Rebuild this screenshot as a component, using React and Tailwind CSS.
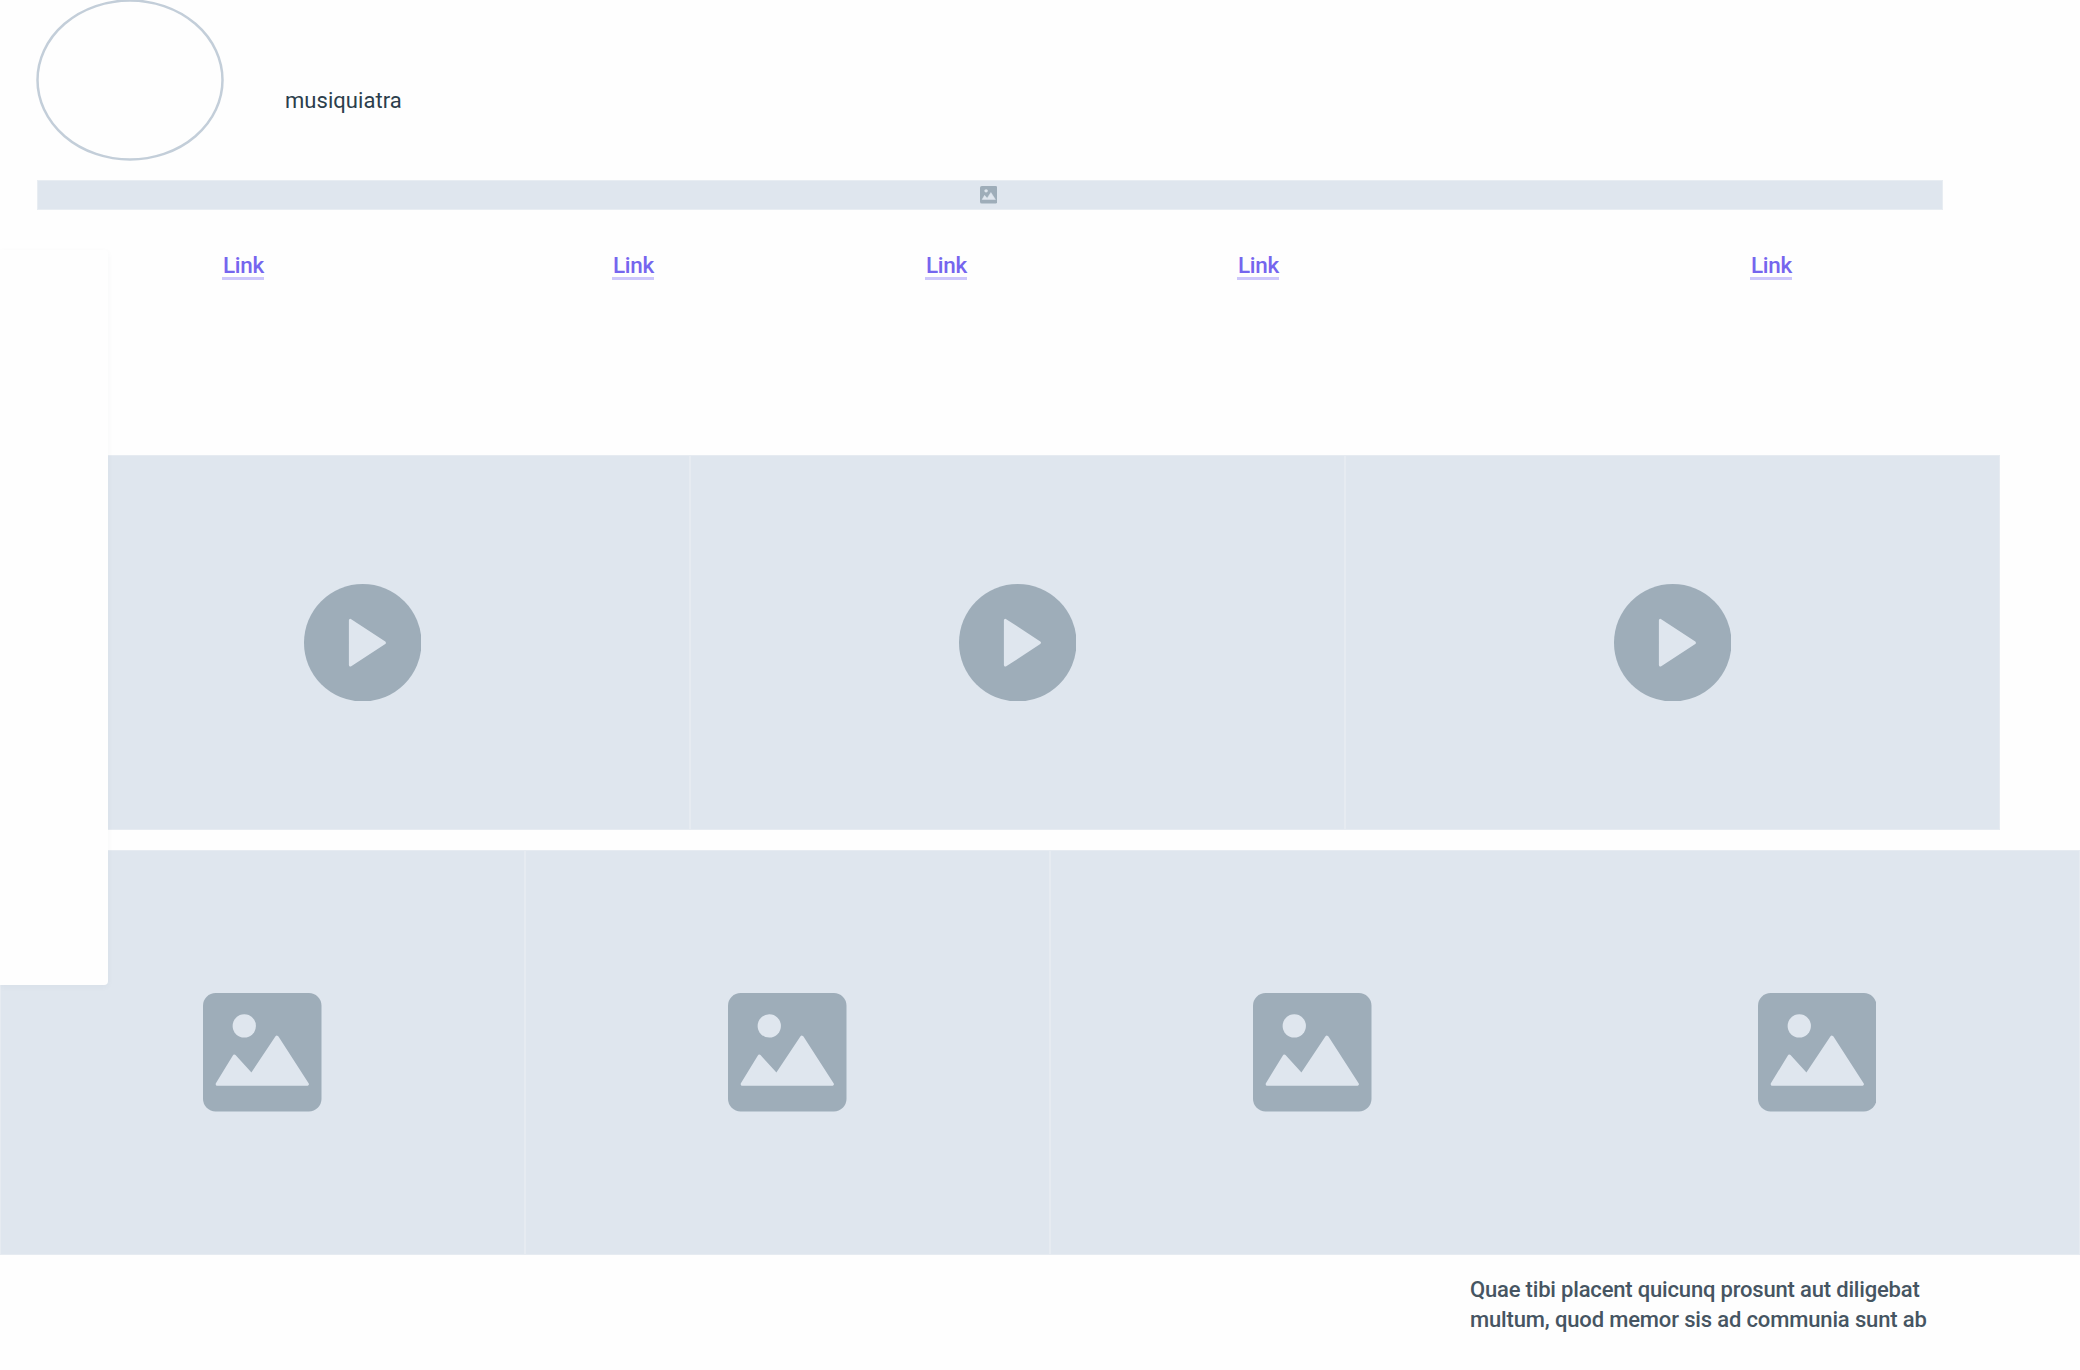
function ImageIcon({ className }) {
  return (
    <svg viewBox="0 0 356 356" className={className}>
      <rect width="356" height="356" rx="38" fill="#9eadb9" />
      <circle cx="124" cy="99" r="35" fill="#dfe6ee" />
      <path
        d="M43 274 94 190 146 247 222 133 313 274Z"
        fill="#dfe6ee"
        stroke="#dfe6ee"
        strokeWidth="10"
        strokeLinejoin="round"
      />
    </svg>
  );
}

function PlayIcon() {
  return (
    <svg viewBox="0 0 352 352" className="size-[117.5px]">
      <circle cx="176" cy="176" r="176" fill="#9eadb9" />
      <path
        d="M139 109V243L241 176Z"
        fill="#dfe6ee"
        stroke="#dfe6ee"
        strokeWidth="9"
        strokeLinejoin="round"
      />
    </svg>
  );
}

function TextLink({ className }) {
  return (
    <a
      className={`h-[30px] w-[42px] shrink-0 border-b-3 border-[#cdc7fb] pl-px text-[22.5px] leading-[31px] font-medium tracking-[-0.3px] whitespace-nowrap text-[#7565ee] ${className}`}
    >
      Link
    </a>
  );
}

const tile =
  "flex shrink-0 items-center justify-center border border-[#e6ebf1] bg-[#dfe6ee]";

export default function App() {
  return (
    <div className="relative h-[1370px] w-[2080px] overflow-hidden bg-[#fefefe] font-['Roboto',sans-serif]">
      <header className="flex h-[180px]">
        <svg viewBox="0 0 188 162" className="-mt-px ml-[36px] h-[162px] w-[188px] shrink-0">
          <ellipse cx="94" cy="81" rx="92.5" ry="79.5" fill="none" stroke="#c3ced9" strokeWidth="2.5" />
        </svg>
        <div className="mt-[86px] ml-[61px] text-[22px] leading-[30px] tracking-[0.04px] text-[#2c3e4c]">
          musiquiatra
        </div>
      </header>

      <div className="ml-[37px] flex h-[30px] w-[1906px] items-center justify-center border border-[#e8edf2] bg-[#dfe6ee]">
        <ImageIcon className="mr-[3px] size-[17.5px]" />
      </div>

      <nav className="mt-[40px] flex h-[205px]">
        <TextLink className="ml-[222px]" />
        <TextLink className="ml-[348px]" />
        <TextLink className="ml-[271px]" />
        <TextLink className="ml-[270px]" />
        <TextLink className="ml-[471px]" />
      </nav>

      <section className="ml-[35px] flex h-[375px]">
        {[0, 1, 2].map((i) => (
          <div key={i} className={`w-[655px] ${tile}`}>
            <PlayIcon />
          </div>
        ))}
      </section>

      <section className="mt-[20px] flex h-[405px]">
        {[0, 1, 2].map((i) => (
          <div key={i} className={`w-[525px] ${tile}`}>
            <ImageIcon className="size-[118.5px]" />
          </div>
        ))}
        <div className="-ml-[20px] flex w-[525px] shrink-0 items-center justify-center border-y border-r border-[#e6ebf1] bg-[#dfe6ee]">
          <ImageIcon className="size-[118.5px]" />
        </div>
      </section>

      <p className="mt-[20px] ml-[1470px] w-[600px] text-[22px] leading-[30px] font-medium text-[#465562]">
        <span className="block tracking-[-0.18px]">Quae tibi placent quicunq prosunt aut diligebat</span>
        <span className="block tracking-[-0.15px]">multum, quod memor sis ad communia sunt ab</span>
      </p>

      {/* Side panel overlapping both galleries */}
      <aside className="absolute top-[250px] left-0 h-[735px] w-[107.5px] rounded-r-[4px] bg-[#fefefe] shadow-[0_2px_6px_rgba(60,80,110,0.04)]" />
    </div>
  );
}
